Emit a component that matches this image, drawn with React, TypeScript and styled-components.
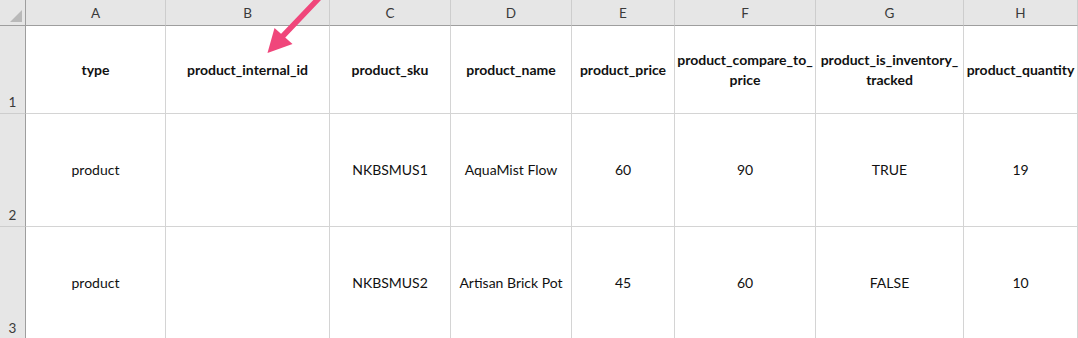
import React from "react";
import styled, { createGlobalStyle } from "styled-components";

const GlobalStyle = createGlobalStyle`
  html, body {
    margin: 0;
    padding: 0;
    background: #ffffff;
    overflow: hidden;
  }
`;

const COLS = [140, 164, 121, 121, 103, 141, 148, 114];
const ROWS = [88, 113, 113];

const Sheet = styled.div`
  position: relative;
  width: 1078px;
  height: 338px;
  overflow: hidden;
  font-family: Lato, "Open Sans", "Liberation Sans", sans-serif;
  color: #111111;
`;

const Grid = styled.div`
  display: grid;
  grid-template-columns: 26px ${COLS.map((c) => `${c}px`).join(" ")};
  grid-template-rows: 26px ${ROWS.map((r) => `${r}px`).join(" ")};
`;

const Corner = styled.div`
  background: #e6e6e6;
  border-right: 1px solid #9e9e9e;
  border-bottom: 1px solid #9e9e9e;
  position: relative;
  box-sizing: border-box;

  &::after {
    content: "";
    position: absolute;
    right: 3px;
    bottom: 3px;
    width: 0;
    height: 0;
    border-left: 12px solid transparent;
    border-bottom: 12px solid #b9b9b9;
  }
`;

const ColHead = styled.div`
  background: #e6e6e6;
  border-right: 1px solid #cdcdcd;
  border-bottom: 1px solid #9e9e9e;
  box-sizing: border-box;
  display: flex;
  align-items: center;
  justify-content: center;
  font-size: 13.5px;
  color: #3a3a3a;
  padding-top: 1px;
`;

const RowHead = styled.div`
  background: #e6e6e6;
  border-right: 1px solid #9e9e9e;
  border-bottom: 1px solid #cdcdcd;
  box-sizing: border-box;
  display: flex;
  align-items: flex-end;
  justify-content: center;
  font-size: 13.5px;
  color: #3a3a3a;
  padding-bottom: 3px;
`;

const Cell = styled.div<{ $bold?: boolean }>`
  border-right: 1px solid #d4d4d4;
  border-bottom: 1px solid #d4d4d4;
  box-sizing: border-box;
  display: flex;
  align-items: center;
  justify-content: center;
  text-align: center;
  font-size: 14px;
  line-height: 20px;
  font-weight: ${({ $bold }) => ($bold ? 700 : 400)};
  white-space: nowrap;
`;

const Arrow = styled.svg`
  position: absolute;
  left: 0;
  top: 0;
  pointer-events: none;
`;

const letters = ["A", "B", "C", "D", "E", "F", "G", "H"];

const headers: React.ReactNode[] = [
  "type",
  "product_internal_id",
  "product_sku",
  "product_name",
  "product_price",
  <>
    product_compare_to_
    <br />
    price
  </>,
  <>
    product_is_inventory_
    <br />
    tracked
  </>,
  "product_quantity",
];

const data = [
  ["product", "", "NKBSMUS1", "AquaMist Flow", "60", "90", "TRUE", "19"],
  ["product", "", "NKBSMUS2", "Artisan Brick Pot", "45", "60", "FALSE", "10"],
];

export default function App() {
  return (
    <>
      <GlobalStyle />
      <Sheet>
        <Grid>
          <Corner />
          {letters.map((l) => (
            <ColHead key={l}>{l}</ColHead>
          ))}

          <RowHead>1</RowHead>
          {headers.map((h, i) => (
            <Cell key={i} $bold>
              <span>{h}</span>
            </Cell>
          ))}

          {data.map((row, r) => (
            <React.Fragment key={r}>
              <RowHead>{r + 2}</RowHead>
              {row.map((v, i) => (
                <Cell key={i}>{v}</Cell>
              ))}
            </React.Fragment>
          ))}
        </Grid>

        <Arrow width="1078" height="338" viewBox="0 0 1078 338">
          <line x1="321" y1="-4" x2="281" y2="38" stroke="#f0467b" strokeWidth="5.5" strokeLinecap="round" />
          <polygon points="267.5,53 274.5,28 292.5,44" fill="#f0467b" />
        </Arrow>
      </Sheet>
    </>
  );
}
